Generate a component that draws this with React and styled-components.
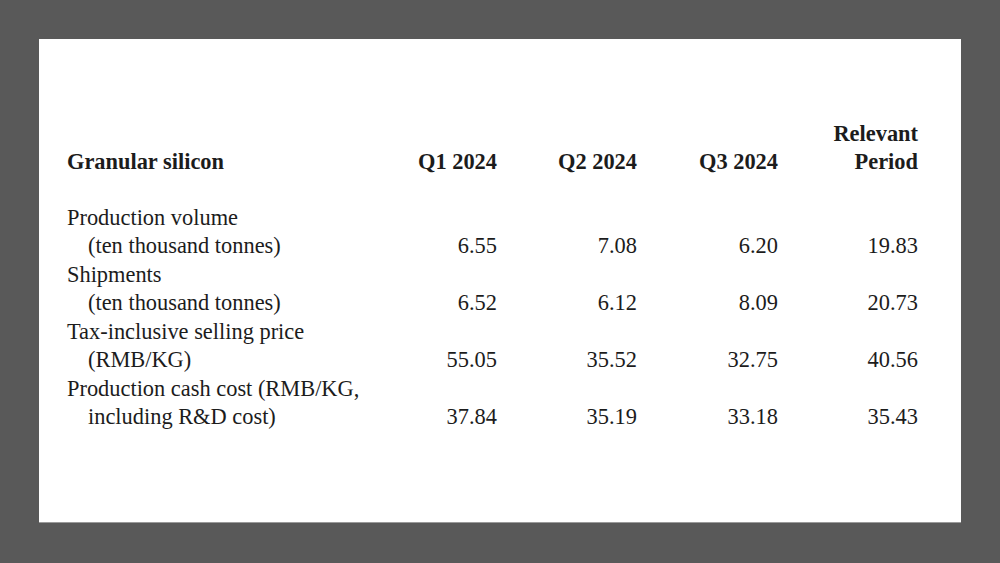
import React from "react";
import styled, { createGlobalStyle } from "styled-components";

const rows = [
  { label: ["Production volume", "(ten thousand tonnes)"], values: ["6.55", "7.08", "6.20", "19.83"] },
  { label: ["Shipments", "(ten thousand tonnes)"], values: ["6.52", "6.12", "8.09", "20.73"] },
  { label: ["Tax-inclusive selling price", "(RMB/KG)"], values: ["55.05", "35.52", "32.75", "40.56"] },
  { label: ["Production cash cost (RMB/KG,", "including R&D cost)"], values: ["37.84", "35.19", "33.18", "35.43"] },
];

const columns = ["Q1 2024", "Q2 2024", "Q3 2024"];

export default function App() {
  return (
    <>
      <GlobalStyle />
      <Page>
        <Panel>
          <Table>
            <HeadCell>Granular silicon</HeadCell>
            {columns.map((c) => (
              <HeadCell key={c} num>
                {c}
              </HeadCell>
            ))}
            <HeadCell num>
              Relevant
              <br />
              Period
            </HeadCell>
            <Spacer />
            {rows.map((row) => (
              <React.Fragment key={row.label[0]}>
                <LabelCell>
                  <span>{row.label[0]}</span>
                  <Indent>{row.label[1]}</Indent>
                </LabelCell>
                {row.values.map((v, i) => (
                  <ValueCell key={i}>{v}</ValueCell>
                ))}
              </React.Fragment>
            ))}
          </Table>
        </Panel>
      </Page>
    </>
  );
}

const GlobalStyle = createGlobalStyle`
  html, body {
    margin: 0;
    padding: 0;
    background: #595959;
  }
`;

const Page = styled.div`
  width: 1000px;
  height: 563px;
  box-sizing: border-box;
  padding: 39px;
  background: #595959;
`;

const Panel = styled.div`
  width: 922px;
  height: 484px;
  box-sizing: border-box;
  background: #ffffff;
  border-bottom: 1px solid #9a9a9a;
  padding: 81px 43px 0 28px;
  font-family: "Liberation Serif", "Times New Roman", serif;
  font-size: 22.4px;
  line-height: 28.5px;
  color: #1c1c1c;
`;

const Table = styled.div`
  display: grid;
  grid-template-columns: 290px 140px 140px 141px 140px;
  align-items: end;
`;

const HeadCell = styled.div`
  font-weight: bold;
  line-height: 27.5px;
  text-align: ${(p) => (p.num ? "right" : "left")};
  white-space: nowrap;
`;

const Spacer = styled.div`
  grid-column: 1 / -1;
  height: 28.5px;
`;

const LabelCell = styled.div`
  display: flex;
  flex-direction: column;
  white-space: nowrap;
`;

const Indent = styled.span`
  padding-left: 21px;
`;

const ValueCell = styled.div`
  text-align: right;
`;
